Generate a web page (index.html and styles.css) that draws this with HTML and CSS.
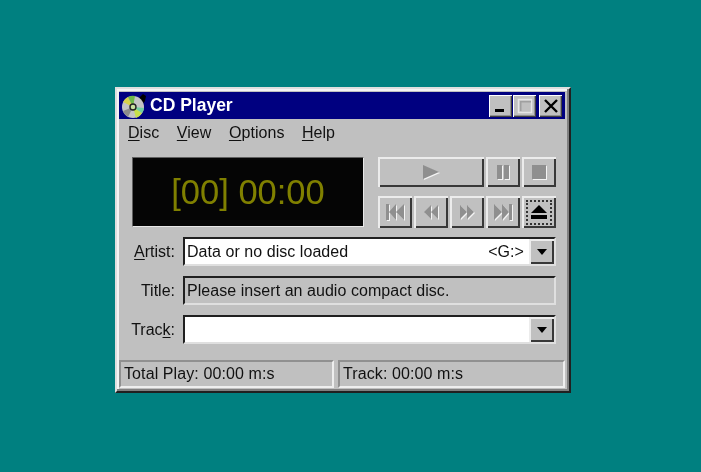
FILE: index.html
```html
<!DOCTYPE html>
<html lang="en">
<head>
  <meta charset="UTF-8" />
  <title>CD Player</title>
  <link rel="stylesheet" href="styles.css">
</head>
<body>

  <div class="window">
    <div class="titlebar">
      <svg class="app-icon" width="26" height="26" viewBox="0 0 26 26">
        <path d="M18 5l4-4 3 2-1 5-3 4z" fill="#000"/>
        <circle cx="12" cy="14" r="11" fill="#c4c4c4"/>
        <path d="M12 14L2 9A11 11 0 0 1 7 4z" fill="#d8d24a"/>
        <path d="M12 14L7 4A11 11 0 0 1 14 3z" fill="#6fb84a"/>
        <path d="M12 14L15 25A11 11 0 0 0 21 20z" fill="#c8e04a"/>
        <path d="M12 14L21 20A11 11 0 0 0 23 15z" fill="#6fd0a0"/>
        <path d="M12 14L2 18A11 11 0 0 0 7 24z" fill="#8c8c8c"/>
        <circle cx="12" cy="14" r="3" fill="#c8e0a0" stroke="#222" stroke-width="1.400"/>
      </svg>
      <span class="title">CD Player</span>
      <div class="caption-btns">
        <button class="cap-btn">
          <svg width="14" height="14" viewBox="0 0 14 14"><rect x="1" y="10" width="9" height="3" fill="#000"/></svg>
        </button>
        <button class="cap-btn">
          <svg width="16" height="16" viewBox="0 0 16 16"><rect x="1.500" y="1.500" width="13" height="13" fill="none" stroke="#e6e6e6" stroke-width="1.500"/><rect x="3" y="3" width="11" height="1.500" fill="#a0a0a0"/><rect x="3" y="3" width="1.500" height="10" fill="#a0a0a0"/></svg>
        </button>
        <button class="cap-btn close">
          <svg width="14" height="14" viewBox="0 0 14 14"><path d="M1 1l12 12M13 1L1 13" stroke="#000" stroke-width="2.400"/></svg>
        </button>
      </div>
    </div>

    <div class="menu">
      <span><u>D</u>isc</span>
      <span><u>V</u>iew</span>
      <span><u>O</u>ptions</span>
      <span><u>H</u>elp</span>
    </div>

    <div class="top">
      <div class="display">[00] 00:00</div>
      <div class="controls">
        <button class="btn wide">
          <svg class="off" width="18" height="16" viewBox="0 0 18 16"><path d="M1 1l16 7-16 7z"/></svg>
        </button>
        <button class="btn">
          <svg class="off" width="14" height="14" viewBox="0 0 14 14"><path d="M1 0h5v14H1zM8 0h5v14H8z"/></svg>
        </button>
        <button class="btn">
          <svg class="off" width="14" height="14" viewBox="0 0 14 14"><path d="M0 0h14v14H0z"/></svg>
        </button>
        <button class="btn">
          <svg class="off" width="20" height="16" viewBox="0 0 20 16"><path d="M1 0h3v16H1zM11 0v16L4 8zM19 0v16l-8-8z"/></svg>
        </button>
        <button class="btn">
          <svg class="off" width="16" height="14" viewBox="0 0 16 14"><path d="M8 0v14L1 7zM15 0v14L8 7z"/></svg>
        </button>
        <button class="btn">
          <svg class="off" width="16" height="14" viewBox="0 0 16 14"><path d="M1 0v14l7-7zM8 0v14l7-7z"/></svg>
        </button>
        <button class="btn">
          <svg class="off" width="20" height="16" viewBox="0 0 20 16"><path d="M1 0v16l8-8zM9 0v16l7-8zM16 0h3v16h-3z"/></svg>
        </button>
        <button class="btn eject">
          <span class="focus">
            <svg width="18" height="15" viewBox="0 0 18 15"><path d="M9 0l8 8H1zM1 10h16v4H1z" fill="#000"/></svg>
          </span>
        </button>
      </div>
    </div>

    <div class="fields">
      <label class="lbl"><u>A</u>rtist:</label>
      <div class="field">
        <span class="val">Data or no disc loaded</span>
        <span class="drive">&lt;G:&gt;</span>
        <button class="drop"><span class="arrow"></span></button>
      </div>
      <label class="lbl">Title:</label>
      <div class="field readonly">
        <span class="val">Please insert an audio compact disc.</span>
      </div>
      <label class="lbl">Trac<u>k</u>:</label>
      <div class="field">
        <span class="val"></span>
        <button class="drop"><span class="arrow"></span></button>
      </div>
    </div>

    <div class="status">
      <div class="panel first">Total Play: 00:00 m:s</div>
      <div class="panel">Track: 00:00 m:s</div>
    </div>
  </div>

</body>
</html>
```

FILE: styles.css
```css
* { box-sizing: border-box; }
body {
  margin: 0;
  width: 701px; height: 472px;
  overflow: hidden;
  background: #008080;
  padding: 87px 0 0 115px;
  font-family: 'Liberation Sans', Arial, sans-serif;
  color: #111;
}
u { text-underline-offset: 2px; }

.window {
  width: 456px; height: 306px;
  background: #c0c0c0;
  border: 2px solid;
  border-color: #dfdfdf #202020 #202020 #dfdfdf;
  box-shadow: inset -2px -2px 0 #808080, inset 2px 2px 0 #f4f4f4;
  padding: 3px 4px 3px 2px;
  display: flex; flex-direction: column;
  filter: blur(0.4px);
}

.titlebar {
  height: 27px;
  background: #000080;
  display: flex; align-items: center;
  padding: 0 3px 0 2px;
  flex-shrink: 0;
}
.app-icon { margin-right: 3px; }
.title {
  color: white;
  font-size: 17.5px; font-weight: bold;
}
.caption-btns { margin-left: auto; display: flex; gap: 1px; }
.cap-btn {
  width: 23px; height: 22px;
  padding: 0;
  background: #c0c0c0;
  border: none;
  box-shadow: inset 1px 1px 0 #fff, inset -1px -1px 0 #404040, inset -2px -2px 0 #909090;
  display: flex; align-items: center; justify-content: center;
}
.cap-btn.close { margin-left: 2px; }

.menu {
  height: 27px;
  display: flex; align-items: center; gap: 17.5px;
  padding-left: 9px;
  font-size: 16px;
  letter-spacing: 0.05px;
  flex-shrink: 0;
}

.top {
  display: flex;
  margin: 11px 0 0 13px;
  gap: 14px;
}
.display {
  width: 232px; height: 70px;
  background: #050505;
  border: 1px solid;
  border-color: #606060 #e8e8e8 #e8e8e8 #606060;
  color: #808000;
  font-size: 34.5px;
  display: flex; align-items: center; justify-content: center;
}

.controls {
  display: grid;
  grid-template-columns: repeat(5, 34px);
  grid-template-rows: 30px 32px;
  column-gap: 2px; row-gap: 9px;
}
.btn {
  padding: 0;
  background: #c0c0c0;
  border: none;
  box-shadow: inset 2px 2px 0 #ececec, inset -2px -2px 0 #383838;
  display: flex; align-items: center; justify-content: center;
}
.btn.wide { grid-column: span 3; width: 106px; }
.off {
  fill: #8f8f8f;
  filter: drop-shadow(1px 1px 0 #f4f4f4);
}
.focus {
  width: 26px; height: 25px;
  border: 2px dotted #333;
  display: flex; align-items: center; justify-content: center;
}

.fields {
  display: grid;
  grid-template-columns: 56px 373px;
  grid-template-rows: 29px 29px 29px;
  row-gap: 10px;
  margin-top: 9px;
  column-gap: 8px;
}
.lbl {
  font-size: 16px;
  text-align: right;
  align-self: center;
}
.field {
  display: flex; align-items: center;
  background: white;
  border: 2px solid;
  border-color: #202020 #dfdfdf #dfdfdf #202020;
  font-size: 16px;
  letter-spacing: 0.05px;
  padding-left: 2px;
}
.field.readonly { background: #c0c0c0; }
.val { flex: 1; white-space: nowrap; }
.drive { margin-right: 5px; }
.drop {
  width: 25px; height: 25px;
  padding: 0;
  background: #c0c0c0;
  border: none;
  box-shadow: inset 2px 2px 0 #ececec, inset -2px -2px 0 #383838;
  display: flex; align-items: center; justify-content: center;
}
.arrow {
  width: 0; height: 0;
  border-left: 5px solid transparent;
  border-right: 5px solid transparent;
  border-top: 6px solid #000;
}

.status {
  display: flex;
  gap: 4px;
  margin-top: auto;
  height: 28px;
}
.panel {
  flex: 1;
  border: 2px solid;
  border-color: #909090 #eeeeee #eeeeee #909090;
  font-size: 16px;
  letter-spacing: 0.1px;
  display: flex; align-items: center;
  padding-left: 3px;
}
.panel.first { flex: 0 0 215px; }
```
